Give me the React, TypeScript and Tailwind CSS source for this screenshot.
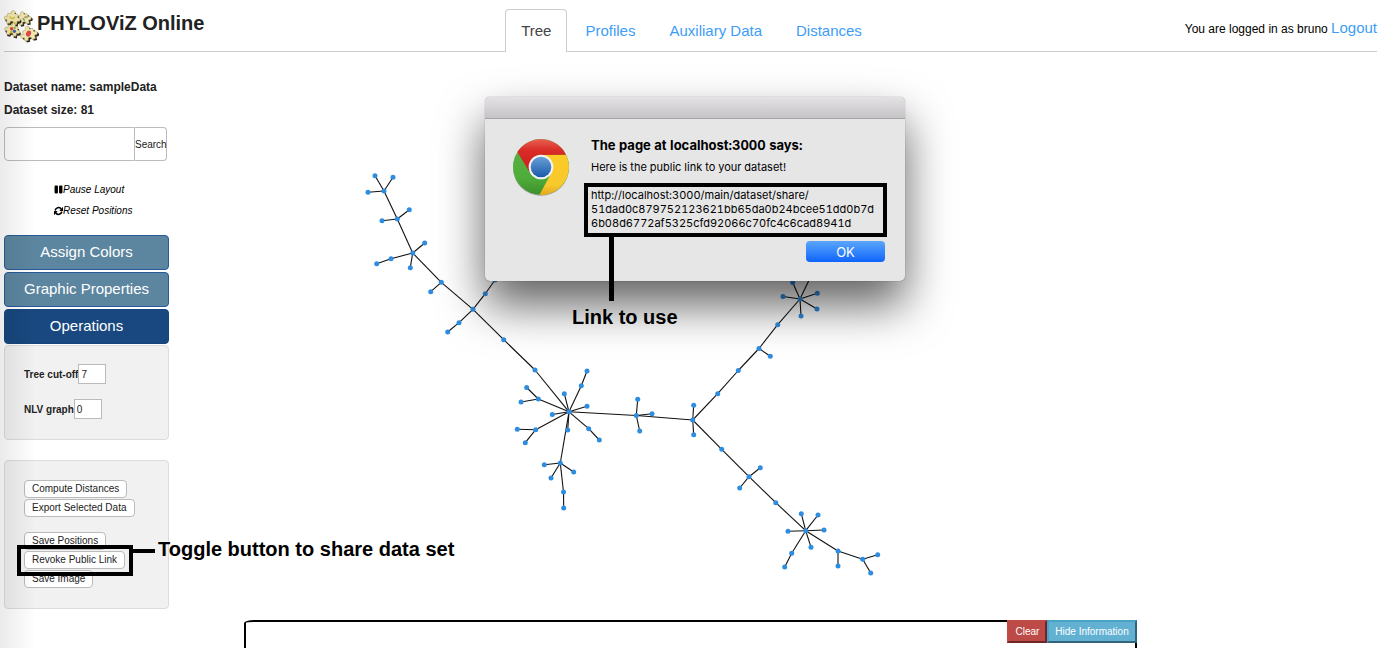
import React from "react";
import { FaPause } from "react-icons/fa";
import { FiRefreshCw } from "react-icons/fi";

type Point = [number, number];

const NODES: Record<string, Point> = {
  a1: [384, 191], a2: [375, 175.7], a3: [393, 177.3], a4: [368, 192.3],
  b1: [397.3, 219], b2: [409.3, 209.7], b3: [382, 220.7],
  c1: [412.7, 253], c2: [424.7, 243], c3: [391, 258.7], c4: [376.7, 263.7], c5: [410.3, 267.7],
  d1: [441.3, 282.3], d2: [430.7, 291.7],
  e1: [473, 309.3], e2: [485.3, 293.7], e3: [495, 280], e4: [459, 322.7], e5: [447.7, 332],
  f1: [503.7, 339.7], f2: [535, 370],
  g0: [569, 411.8], g1: [581.3, 385.7], g2: [587, 371], g3: [564.3, 393.7], g4: [587, 406.3],
  g5: [552.3, 414.5], g6: [538.3, 399], g7: [526.7, 387.5], g8: [521, 402], g9: [535.7, 429.7],
  g10: [517.3, 429.3], g11: [525.3, 442.7], g12: [588.7, 428.7], g13: [599.3, 440], g14: [567.7, 430],
  h0: [560.3, 463], h1: [544.3, 464.7], h2: [551, 478], h3: [573.7, 472], h4: [563.5, 492], h5: [563.7, 508],
  i0: [636.3, 415.5], i1: [637.7, 399.3], i2: [652, 413.7], i3: [639.7, 431],
  j0: [692.7, 420], j1: [693.7, 405.3], j2: [693.7, 434.7],
  k1: [717.7, 393.7], k2: [738.3, 370.5], k3: [759, 348.5], k4: [770.3, 356.3], k5: [777.7, 324.7],
  l0: [800, 299], l1: [792.7, 282.5], l2: [783, 296.5], l3: [817.3, 293.3], l4: [817, 309], l5: [801, 316], l6: [810, 278],
  m1: [721.7, 449.3], m2: [749, 476.7], m3: [760.3, 467.7], m4: [739.7, 488], m5: [775.8, 502.7],
  n0: [805.7, 530.7], n1: [801.3, 513.7], n2: [818, 515], n3: [788, 531.3], n4: [824, 530], n5: [811, 547.3],
  n6: [791.7, 553.3], n7: [784.7, 567],
  o0: [838, 551], o1: [838, 566], o2: [862.7, 559.3], o3: [877.7, 554.7], o4: [870.7, 573],
};

const EDGES =
  "a1-a2 a1-a3 a1-a4 a1-b1 b1-b2 b1-b3 b1-c1 c1-c2 c1-c3 c3-c4 c1-c5 c1-d1 d1-d2 d1-e1 e1-e2 e2-e3 e1-e4 e4-e5 e1-f1 f1-f2 f2-g0 g0-g1 g1-g2 g0-g3 g0-g4 g0-g5 g0-g6 g6-g7 g6-g8 g0-g9 g9-g10 g9-g11 g0-g12 g12-g13 g0-g14 g0-h0 h0-h1 h0-h2 h0-h3 h0-h4 h4-h5 g0-i0 i0-i1 i0-i2 i0-i3 i0-j0 j0-j1 j0-j2 j0-k1 k1-k2 k2-k3 k3-k4 k3-k5 k5-l0 l0-l1 l0-l2 l0-l3 l0-l4 l0-l5 l0-l6 j0-m1 m1-m2 m2-m3 m2-m4 m2-m5 m5-n0 n0-n1 n0-n2 n0-n3 n0-n4 n0-n5 n0-n6 n6-n7 n0-o0 o0-o1 o0-o2 o2-o3 o2-o4"
    .split(" ")
    .map((edge) => edge.split("-"));

function TreeGraph() {
  return (
    <svg className="h-[556px] w-full" role="img" aria-label="Tree">
      <g transform="translate(-169 -52)">
        {EDGES.map(([from, to]) => (
          <line
            key={from + to}
            x1={NODES[from][0]}
            y1={NODES[from][1]}
            x2={NODES[to][0]}
            y2={NODES[to][1]}
            stroke="#111"
            strokeWidth="1.1"
          />
        ))}
        {Object.entries(NODES).map(([id, [x, y]]) => (
          <circle key={id} cx={x} cy={y} r="2.5" fill="#2f8de0" />
        ))}
      </g>
    </svg>
  );
}

const PIECE =
  "M-12 -11 L-4 -12 Q-6 -19 0 -19 Q6 -19 4 -12 L12 -11 L12 -4 Q19 -6 19 0 Q19 6 12 4 L12 12 L4 12 Q5 6 0 6 Q-5 6 -4 12 L-12 12 L-12 4 Q-19 6 -19 0 Q-19 -6 -12 -4 Z";

function PuzzleLogo() {
  const pieces = [
    "translate(68 60) rotate(-12) scale(1.2)",
    "translate(36 58) rotate(8) scale(1.25)",
    "translate(36 92) rotate(14) scale(1.2)",
    "translate(84 104) rotate(-14) scale(1.3)",
  ];
  return (
    <svg className="size-9 shrink-0" viewBox="12 30 104 104" aria-hidden="true">
      {pieces.map((transform) => (
        <g key={transform} transform={transform}>
          <path d={PIECE} fill="#2b261c" transform="translate(3 4)" />
          <path d={PIECE} fill="#f3e9b0" stroke="#a39659" strokeWidth="1" />
        </g>
      ))}
      <path d="M28 52 q8 10 15 1 M38 68 l8 4" stroke="#d2bd3a" strokeWidth="4" fill="none" />
      <path d="M66 57 l6 6 M76 52 l4 3" stroke="#6f9a93" strokeWidth="4" />
      <circle cx="73" cy="54" r="3" fill="#dc8a5a" />
      <circle cx="34" cy="87" r="5" fill="#e0452f" />
      <circle cx="42" cy="94" r="5" fill="#3f67b5" />
      <circle cx="33" cy="97" r="4" fill="#e8b52c" />
      <circle cx="43" cy="84" r="3" fill="#79a848" />
      <ellipse cx="83" cy="101" rx="7" ry="9" fill="#e0484c" transform="rotate(25 83 101)" />
    </svg>
  );
}

function ChromeLogo() {
  return (
    <svg className="size-[60px]" viewBox="93 171 180 180" aria-hidden="true">
      <defs>
        <linearGradient id="red" x1="0" y1="0" x2="0" y2="1">
          <stop offset="0" stopColor="#e8604f" />
          <stop offset=".35" stopColor="#d92a26" />
          <stop offset="1" stopColor="#c92020" />
        </linearGradient>
        <linearGradient id="green" x1="0" y1="0" x2="0" y2="1">
          <stop offset="0" stopColor="#5ab349" />
          <stop offset=".7" stopColor="#4fac39" />
          <stop offset="1" stopColor="#3c8f2c" />
        </linearGradient>
        <linearGradient id="yellow" x1="0" y1="0" x2="0" y2="1">
          <stop offset="0" stopColor="#fbcb26" />
          <stop offset=".75" stopColor="#f8c92c" />
          <stop offset="1" stopColor="#e2a921" />
        </linearGradient>
        <linearGradient id="blue" x1="0" y1="0" x2="0" y2="1">
          <stop offset="0" stopColor="#6a9fd8" />
          <stop offset="1" stopColor="#195aa8" />
        </linearGradient>
      </defs>
      <circle cx="183" cy="264" r="84" fill="#000" opacity=".25" />
      <circle cx="183" cy="261" r="84" fill="url(#green)" />
      <path d="M183 225 L258 224 A84 84 0 0 1 178 345 L214 279 Z" fill="url(#yellow)" />
      <path d="M112 216 A84 84 0 0 1 258 224 L183 225 L150 278 Z" fill="url(#red)" />
      <circle cx="183" cy="261" r="37" fill="#f1f3f5" />
      <circle cx="183" cy="261" r="31" fill="url(#blue)" />
    </svg>
  );
}

const tab = "ml-[2px] border border-b-0 px-[15px] pt-[10px] pb-[10px] text-[15px] leading-[22px]";
const idleTab = " border-transparent text-[#3d9df6]";

function Header() {
  return (
    <header className="grid grid-cols-[1fr_auto_1fr] border-b border-[#ccc] pt-[9px]">
      <div className="flex items-start">
        <PuzzleLogo />
        <h1 className="-ml-[3px] text-[20px] leading-7 font-bold text-[#222]">PHYLOViZ Online</h1>
      </div>
      <nav className="-mb-px flex">
        <a href="#tree" className={tab + " rounded-t border-[#ccc] bg-white text-[#444]"}>Tree</a>
        <a href="#profiles" className={tab + idleTab}>Profiles</a>
        <a href="#auxiliary" className={tab + idleTab}>Auxiliary Data</a>
        <a href="#distances" className={tab + idleTab}>Distances</a>
      </nav>
      <p className="pt-2 text-right text-[12px] leading-[22px]">
        You are logged in as bruno{" "}
        <a href="#logout" className="text-[15px] text-[#3d9df6]">Logout</a>
      </p>
    </header>
  );
}

const smallButton =
  "h-[18px] rounded border border-[#bbb] bg-white px-[7px] text-[10px] leading-4 text-[#222]";
const sectionButton =
  "h-[35px] rounded border border-[#28599a] bg-[#5c869f] text-[15px] font-medium text-white";
const cell = "h-5 w-7 border border-[#bbb] bg-white pl-[2px] text-[10px]";

function Sidebar() {
  return (
    <aside className="w-[165px] shrink-0 pt-6 text-[#222]">
      <p className="text-[12px] leading-[23px] font-bold">Dataset name: sampleData</p>
      <p className="text-[12px] leading-[23px] font-bold">Dataset size: 81</p>
      <form className="mt-[5px] flex h-[34px] w-[163px]">
        <input aria-label="Search term" className="min-w-0 flex-1 rounded-l border border-[#bbb] bg-white px-2 text-[12px]" />
        <button type="button" className="w-8 rounded-r border border-l-0 border-[#bbb] bg-white text-[10px]">
          Search
        </button>
      </form>
      <div className="mt-[18px] ml-[50px] flex flex-col items-start text-[10px] text-black italic">
        <button type="button" className="flex h-[21px] items-center italic">
          <FaPause className="w-[9px]" size={9} />Pause Layout
        </button>
        <button type="button" className="flex h-[21px] items-center italic">
          <FiRefreshCw className="w-[9px]" size={10} strokeWidth={4} />Reset Positions
        </button>
      </div>
      <div className="mt-[14px] flex flex-col gap-[2px]">
        <button type="button" className={sectionButton}>Assign Colors</button>
        <button type="button" className={sectionButton}>Graphic Properties</button>
        <button type="button" className="h-[35px] rounded border border-[#17457b] bg-[#18487f] text-[15px] font-medium text-white">
          Operations
        </button>
      </div>
      <div className="mt-px flex flex-col gap-[15px] rounded border border-[#dcdcdc] bg-[#f1f1f1] px-[19px] pt-[18px] pb-5 text-[10px]">
        <div className="flex items-center">
          <label htmlFor="cutoff" className="font-bold">Tree cut-off</label>
          <input id="cutoff" defaultValue="7" className={cell} />
        </div>
        <div className="flex items-center">
          <label htmlFor="nlv" className="font-bold">NLV graph</label>
          <input id="nlv" defaultValue="0" className={cell} />
        </div>
      </div>
      <div className="mt-5 flex flex-col items-start gap-px rounded border border-[#dcdcdc] bg-[#f1f1f1] px-[19px] pt-[19px] pb-5">
        <button type="button" className={smallButton}>Compute Distances</button>
        <button type="button" className={smallButton}>Export Selected Data</button>
        <button type="button" className={smallButton + " mt-[14px]"}>Save Positions</button>
        <div className="relative z-10 flex">
          <button type="button" className={smallButton}>Revoke Public Link</button>
          <div className="absolute -top-[6px] -left-[7px] h-[31px] w-[116px] border-4 border-black" />
          <div className="absolute -top-[14px] left-[109px] flex items-center whitespace-nowrap text-black">
            <span className="mt-1 h-1 w-[22px] bg-black" />
            <span className="ml-[3px] text-[20px] leading-6 font-bold">Toggle button to share data set</span>
          </div>
        </div>
        <button type="button" className={smallButton}>Save Image</button>
      </div>
    </aside>
  );
}

function PublicLinkDialog() {
  return (
    <div
      role="dialog"
      aria-labelledby="dialog-title"
      className="absolute top-[45px] left-[316px] w-[420px] rounded-[5px] bg-[#e6e6e6] font-['Inter',sans-serif] text-[11px] leading-[14px] text-black tabular-nums shadow-[0_0_1px_rgba(0,0,0,0.6),0_24px_46px_rgba(0,0,0,0.62)]"
    >
      <div className="h-[22px] rounded-t-[5px] border-b border-[#a5a3a5] bg-linear-to-b from-[#e4e2e4] to-[#c6c4c6]" />
      <div className="flex pt-[18px] pr-[18px] pb-[19px] pl-[26px]">
        <ChromeLogo />
        <div className="ml-[13px] flex-1">
          <h2 id="dialog-title" className="pl-[7px] text-[13px] leading-4 font-bold">The page at localhost:3000 says:</h2>
          <p className="mt-[7px] pl-[7px]">Here is the public link to your dataset!</p>
          <div className="relative mt-[9px] border-4 border-black pt-px pb-[3px] pl-[3px] whitespace-nowrap">
            http://localhost:3000/main/dataset/share/
            <br />
            51dad0c879752123621bb65da0b24bcee51dd0b7d
            <br />
            6b08d6772af5325cfd92066c70fc4c6cad8941d
            <div className="absolute top-[46px] left-[21px] h-[68px] w-[5px] bg-black" />
            <p className="absolute top-[118px] -left-4 font-['Liberation_Sans',sans-serif] text-[20px] leading-6 font-bold">
              Link to use
            </p>
          </div>
          <div className="mt-1 flex justify-end pr-[2px]">
            <button type="button" className="h-[21px] w-[79px] rounded bg-linear-to-b from-[#5aa5fa] to-[#0c63fb] text-[13px] text-white">
              OK
            </button>
          </div>
        </div>
      </div>
    </div>
  );
}

export default function App() {
  return (
    <div className="relative overflow-hidden bg-white px-1 font-['Liberation_Sans',Arial,sans-serif] text-black">
      <Header />
      <main className="flex">
        <Sidebar />
        <div className="relative min-w-0 flex-1">
          <TreeGraph />
          <PublicLinkDialog />
        </div>
      </main>
      <section className="mx-auto mt-[11px] h-7 w-[65%] rounded-t-[10px_3px] border-2 border-b-0 border-black">
        <div className="-mt-[2px] -mr-[2px] flex justify-end text-[10px] text-white">
          <button type="button" className="h-[23px] border-2 border-t-[#c04a45] border-r-[#6f2725] border-b-[#6f2725] border-l-[#c04a45] bg-[#bd4a46] px-[6px]">
            Clear
          </button>
          <button type="button" className="h-[23px] border-2 border-t-[#4aa3c4] border-r-[#32657a] border-b-[#32657a] border-l-[#4aa3c4] bg-[#62b1d3] px-[6px]">
            Hide Information
          </button>
        </div>
      </section>
      <div className="pointer-events-none absolute inset-y-0 left-0 w-9 bg-linear-to-r from-black/8 to-transparent" />
    </div>
  );
}
